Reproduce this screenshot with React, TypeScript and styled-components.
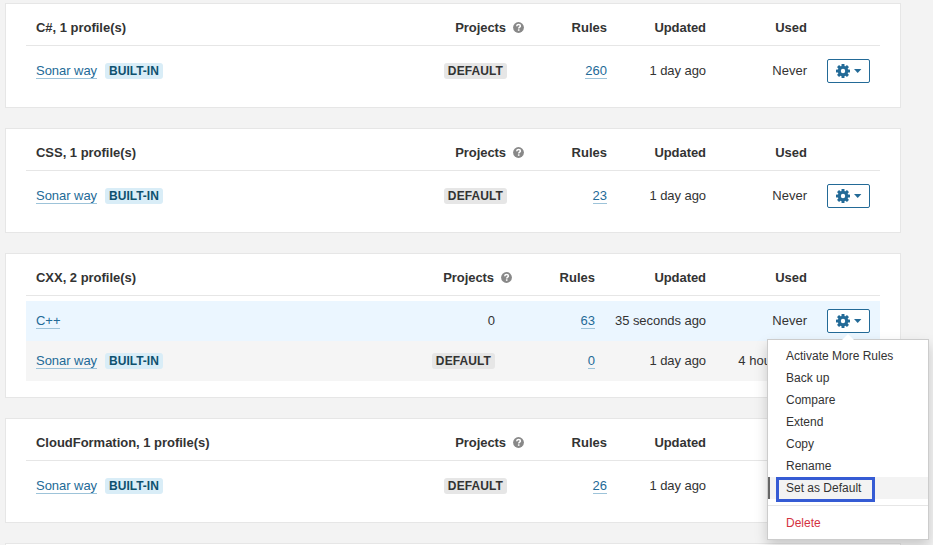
import React from 'react';
import styled, { createGlobalStyle, css } from 'styled-components';

const GlobalStyle = createGlobalStyle`
  * { box-sizing: border-box; }
  html, body { margin: 0; height: 100%; overflow: hidden; }
  body {
    background: #f3f3f3;
    color: #333;
    font-family: "Liberation Sans", Arial, sans-serif;
    font-size: 13px;
    line-height: 20px;
  }
`;

const Page = styled.main`
  height: 545px;
  overflow: hidden;
  padding: 3px 32px 0 5px;
  display: flex;
  flex-direction: column;
  gap: 20px;
`;

const Card = styled.section`
  flex: none;
  width: 896px;
  min-height: 105px;
  border: 1px solid #e6e6e6;
  background: #fff;
  padding: 0 20px 16px;
`;

const columns = css<{ $wide?: boolean }>`
  display: grid;
  grid-template-columns: ${p =>
    p.$wide ? '1fr 130px 83px 111px 101px 63px' : '1fr 130px 83px 99px 101px 63px'};
  align-items: center;
`;

const HeadRow = styled.div<{ $wide?: boolean }>`
  ${columns}
  height: 42px;
  padding-top: 7px;
  border-bottom: 1px solid #e6e6e6;
  margin-bottom: 5px;
  font-weight: 700;
`;

const Row = styled.div<{ $wide?: boolean; $tone?: 'selected' | 'stripe' }>`
  ${columns}
  height: 40px;
  background: ${p =>
    p.$tone === 'selected' ? '#ebf6ff' : p.$tone === 'stripe' ? '#f5f5f5' : 'transparent'};
`;

const NameCell = styled.div<{ $heading?: boolean }>`
  display: flex;
  align-items: center;
  gap: 8px;
  padding-left: 10px;
  letter-spacing: ${p => (p.$heading ? '-0.02px' : '-0.04px')};
  white-space: nowrap;
`;

const Cell = styled.div<{ $inset?: number; $tight?: boolean }>`
  display: flex;
  justify-content: flex-end;
  align-items: center;
  padding-right: ${p => p.$inset ?? 10}px;
  letter-spacing: ${p => (p.$tight ? '-0.06px' : 'normal')};
  white-space: nowrap;
`;

const Link = styled.a`
  display: block;
  height: 16px;
  line-height: 16px;
  border-bottom: 1px solid #9dc3d9;
  color: #236a97;
  text-decoration: none;
`;

const Badge = styled.span<{ $info?: boolean }>`
  height: 16px;
  padding: 0 4px;
  border-radius: 3px;
  font-size: 12px;
  font-weight: 700;
  line-height: 16px;
  letter-spacing: ${p => (p.$info ? '0' : '0.1px')};
  background: ${p => (p.$info ? '#d9edf7' : '#e6e6e6')};
  color: ${p => (p.$info ? '#0e516f' : '#333')};
`;

const HelpSvg = styled.svg`
  margin: 0 0 1px 7px;
  display: block;
`;

const ActionButton = styled.button`
  width: 43px;
  height: 24px;
  padding: 0 0 0 8px;
  border: 1px solid #236a97;
  border-radius: 2px;
  background: #fff;
  display: flex;
  align-items: center;
  gap: 4px;
`;

const ActionCell = styled.div`
  position: relative;
  padding-left: 10px;
`;

const Menu = styled.div`
  position: absolute;
  z-index: 2;
  top: 30px;
  left: -50px;
  width: 162px;
  border: 1px solid #ccc;
  padding: 5px 0;
  background: #fff;
  box-shadow: 0 6px 12px rgba(0, 0, 0, 0.175);
  font-size: 12px;
`;

const Arrow = styled.svg`
  position: absolute;
  top: -6px;
  left: 74px;
`;

const MenuItem = styled.div<{ $active?: boolean; $danger?: boolean }>`
  height: 22px;
  line-height: 22px;
  padding-left: 16px;
  border-left: 2px solid ${p => (p.$active ? '#666' : 'transparent')};
  background: ${p => (p.$active ? '#f3f3f3' : 'transparent')};
  color: ${p => (p.$danger ? '#d4333f' : '#333')};
  white-space: nowrap;
`;

const Divider = styled.div`
  height: 1px;
  margin: 6px 0;
  background: #e6e6e6;
`;

const Highlight = styled.div`
  position: absolute;
  left: 8px;
  top: 137px;
  width: 99px;
  height: 25px;
  border: 3px solid #355bd4;
`;

const HelpIcon = () => (
  <HelpSvg width="11" height="11" viewBox="0 0 11 11">
    <circle cx="5.5" cy="5.5" r="5.4" fill="#888" />
    <path d="M3.7 4.2C3.8 2.9 4.6 2.4 5.6 2.4c1.1 0 1.8.6 1.8 1.5 0 1.3-1.7 1.3-1.7 2.7" fill="none" stroke="#fff" strokeWidth="1.5" />
    <rect x="4.9" y="7.3" width="1.6" height="1.5" fill="#fff" />
  </HelpSvg>
);

const GearIcon = () => (
  <svg width="14" height="14" viewBox="0 0 14 14">
    <g fill="#236a97">
      {[0, 45, 90, 135].map(angle => (
        <rect key={angle} x="5.5" y="0" width="3" height="14" rx="0.5" transform={`rotate(${angle} 7 7)`} />
      ))}
      <circle cx="7" cy="7" r="5.2" />
    </g>
    <circle cx="7" cy="7" r="2.2" fill="#fff" />
  </svg>
);

const Caret = () => (
  <svg width="8" height="5" viewBox="0 0 8 5">
    <path d="M0 0h7.4L3.7 4z" fill="#236a97" />
  </svg>
);

const ProfileMenu = () => (
  <Menu>
    <Arrow width="12" height="7" viewBox="0 0 12 7">
      <path d="M0 6L6 0l6 6v1H0z" fill="#fff" />
    </Arrow>
    {['Activate More Rules', 'Back up', 'Compare', 'Extend', 'Copy', 'Rename'].map(label => (
      <MenuItem key={label}>{label}</MenuItem>
    ))}
    <MenuItem $active>Set as Default</MenuItem>
    <Divider />
    <MenuItem $danger>Delete</MenuItem>
    <Highlight />
  </Menu>
);

type Profile = {
  name: string;
  builtIn?: boolean;
  projects?: number;
  rules: number;
  updated: string;
  used: string;
  tone?: 'selected' | 'stripe';
  menu?: boolean;
};

const sonarWay = (rules: number): Profile => ({
  name: 'Sonar way',
  builtIn: true,
  rules,
  updated: '1 day ago',
  used: 'Never',
});

const languages: { title: string; wide?: boolean; profiles: Profile[] }[] = [
  { title: 'C#, 1 profile(s)', profiles: [sonarWay(260)] },
  { title: 'CSS, 1 profile(s)', profiles: [sonarWay(23)] },
  {
    title: 'CXX, 2 profile(s)',
    wide: true,
    profiles: [
      { name: 'C++', projects: 0, rules: 63, updated: '35 seconds ago', used: 'Never', tone: 'selected', menu: true },
      { ...sonarWay(0), used: '4 hours ago', tone: 'stripe' },
    ],
  },
  { title: 'CloudFormation, 1 profile(s)', profiles: [sonarWay(26)] },
];

export default function App() {
  return (
    <>
      <GlobalStyle />
      <Page>
        {languages.map(({ title, wide, profiles }) => (
          <Card key={title}>
            <HeadRow $wide={wide}>
              <NameCell $heading>{title}</NameCell>
              <Cell $tight>Projects<HelpIcon /></Cell>
              <Cell>Rules</Cell>
              <Cell $tight>Updated</Cell>
              <Cell>Used</Cell>
            </HeadRow>
            {profiles.map(p => (
              <Row key={p.name} $wide={wide} $tone={p.tone}>
                <NameCell>
                  <Link>{p.name}</Link>
                  {p.builtIn && <Badge $info>BUILT-IN</Badge>}
                </NameCell>
                <Cell $inset={27}>{p.projects ?? <Badge>DEFAULT</Badge>}</Cell>
                <Cell><Link>{p.rules}</Link></Cell>
                <Cell $tight>{p.updated}</Cell>
                <Cell>{p.used}</Cell>
                <ActionCell>
                  <ActionButton aria-label="Profile actions"><GearIcon /><Caret /></ActionButton>
                  {p.menu && <ProfileMenu />}
                </ActionCell>
              </Row>
            ))}
          </Card>
        ))}
        <Card />
      </Page>
    </>
  );
}
